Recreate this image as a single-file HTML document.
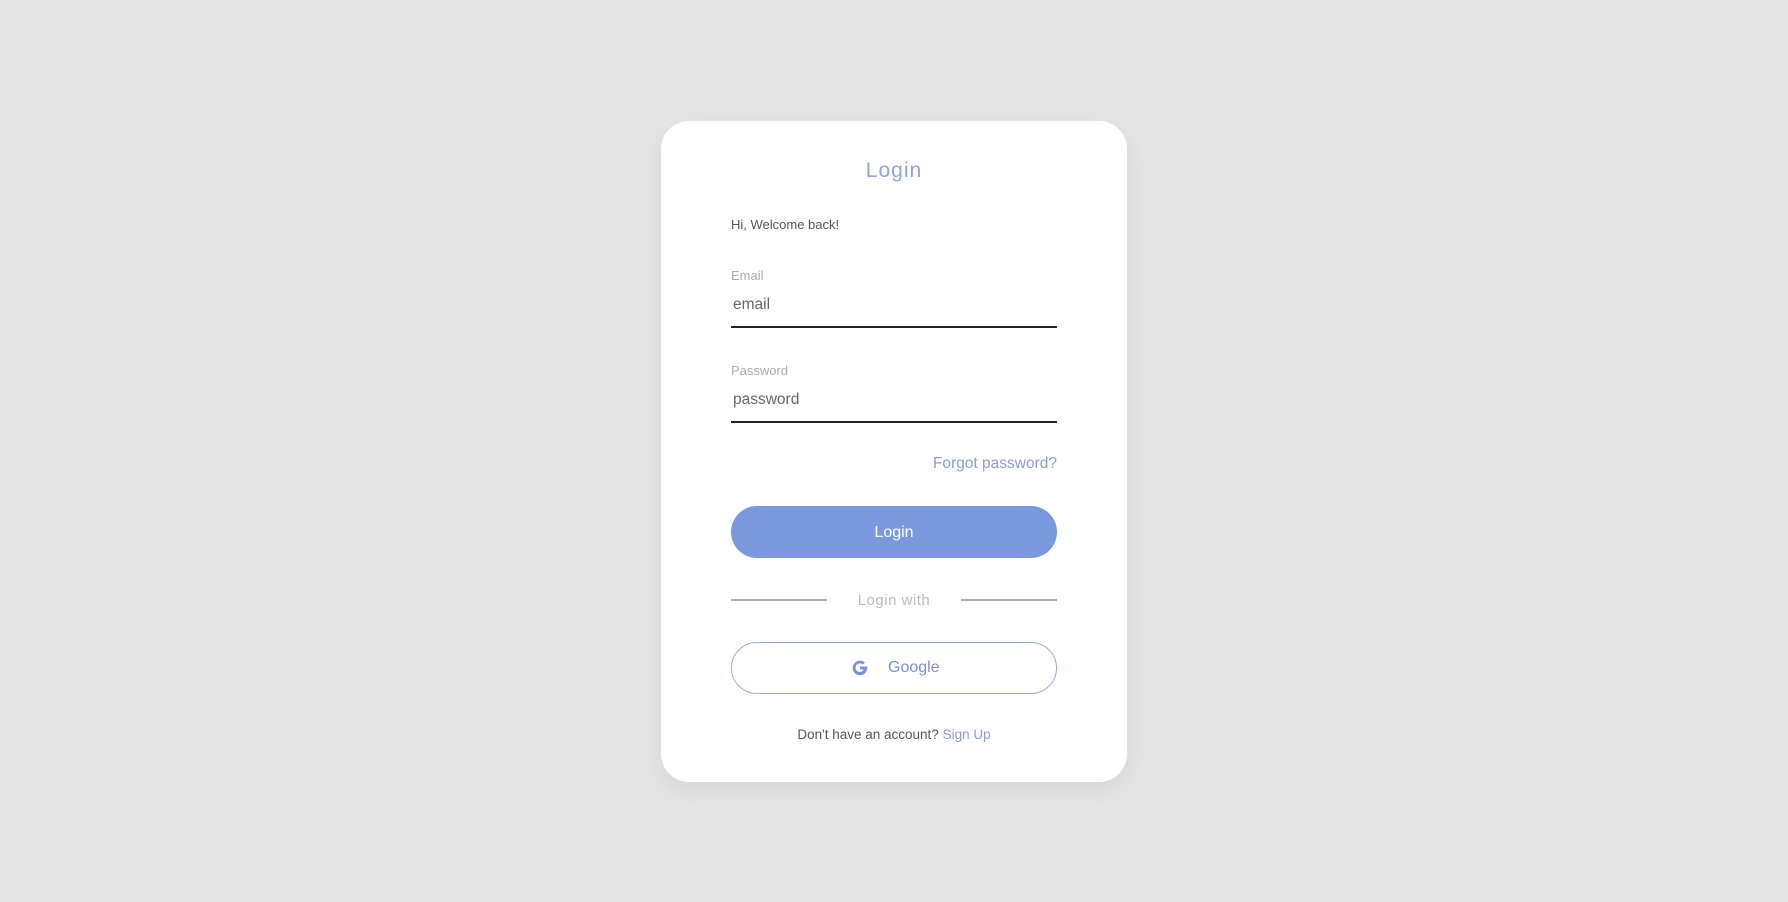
<!DOCTYPE html>
<html><head><meta charset="utf-8"><style>
*{margin:0;padding:0;box-sizing:border-box}
body{width:1788px;height:902px;background:#e4e4e4;font-family:"Liberation Sans",sans-serif;position:relative;overflow:hidden}
.card{position:absolute;left:661px;top:121px;width:466px;height:661px;background:#fff;border-radius:28px;box-shadow:0 8px 24px rgba(0,0,0,0.06)}
.a{position:absolute;white-space:nowrap}
.line{position:absolute;height:2px;background:#222}
</style></head><body>
<div class="card">
<div class="a" style="left:0;width:466px;text-align:center;top:38px;font-size:21px;color:#93a2d6;letter-spacing:1px">Login</div>
<div class="a" style="left:70px;top:96px;font-size:13px;color:#555">Hi, Welcome back!</div>
<div class="a" style="left:70px;top:147px;font-size:13px;color:#aaa">Email</div>
<div class="a" style="left:72px;top:175px;font-size:15.5px;color:#666">email</div>
<div class="line" style="left:70px;width:326px;top:205px"></div>
<div class="a" style="left:70px;top:242px;font-size:13px;color:#aaa">Password</div>
<div class="a" style="left:72px;top:270px;font-size:15.5px;color:#666">password</div>
<div class="line" style="left:70px;width:326px;top:300px"></div>
<div class="a" style="right:70px;top:334px;font-size:15.5px;color:#8a9bd8">Forgot password?</div>
<div class="a" style="left:70px;top:385px;width:326px;height:52px;border-radius:26px;background:#7b97de;color:#fff;font-size:16px;text-align:center;line-height:54px">Login</div>
<div class="line" style="left:70px;width:96px;top:478px;background:#aaa"></div>
<div class="line" style="left:300px;width:96px;top:478px;background:#aaa"></div>
<div class="a" style="left:0;width:466px;text-align:center;top:471px;font-size:15px;color:#bbb;letter-spacing:0.5px">Login with</div>
<div class="a" style="left:70px;top:521px;width:326px;height:52px;border-radius:26px;border:1px solid #9aabdf"></div>
<svg class="a" style="left:190px;top:538px" width="18" height="18" viewBox="0 0 18 18"><path d="M15.5 7.5H9v3h3.7A4.3 4.3 0 1 1 11.8 5.6l2.1-2.1A7.3 7.3 0 1 0 16.3 9c0-.5 0-1-.1-1.5z" fill="#7b8fd6"/></svg>
<div class="a" style="left:227px;top:538px;font-size:16px;color:#7d8fd0">Google</div>
<div class="a" style="left:0;width:466px;text-align:center;top:606px;font-size:13.5px;color:#555">Don't have an account? <span style="color:#8a9bd8">Sign Up</span></div>
</div>
</body></html>
